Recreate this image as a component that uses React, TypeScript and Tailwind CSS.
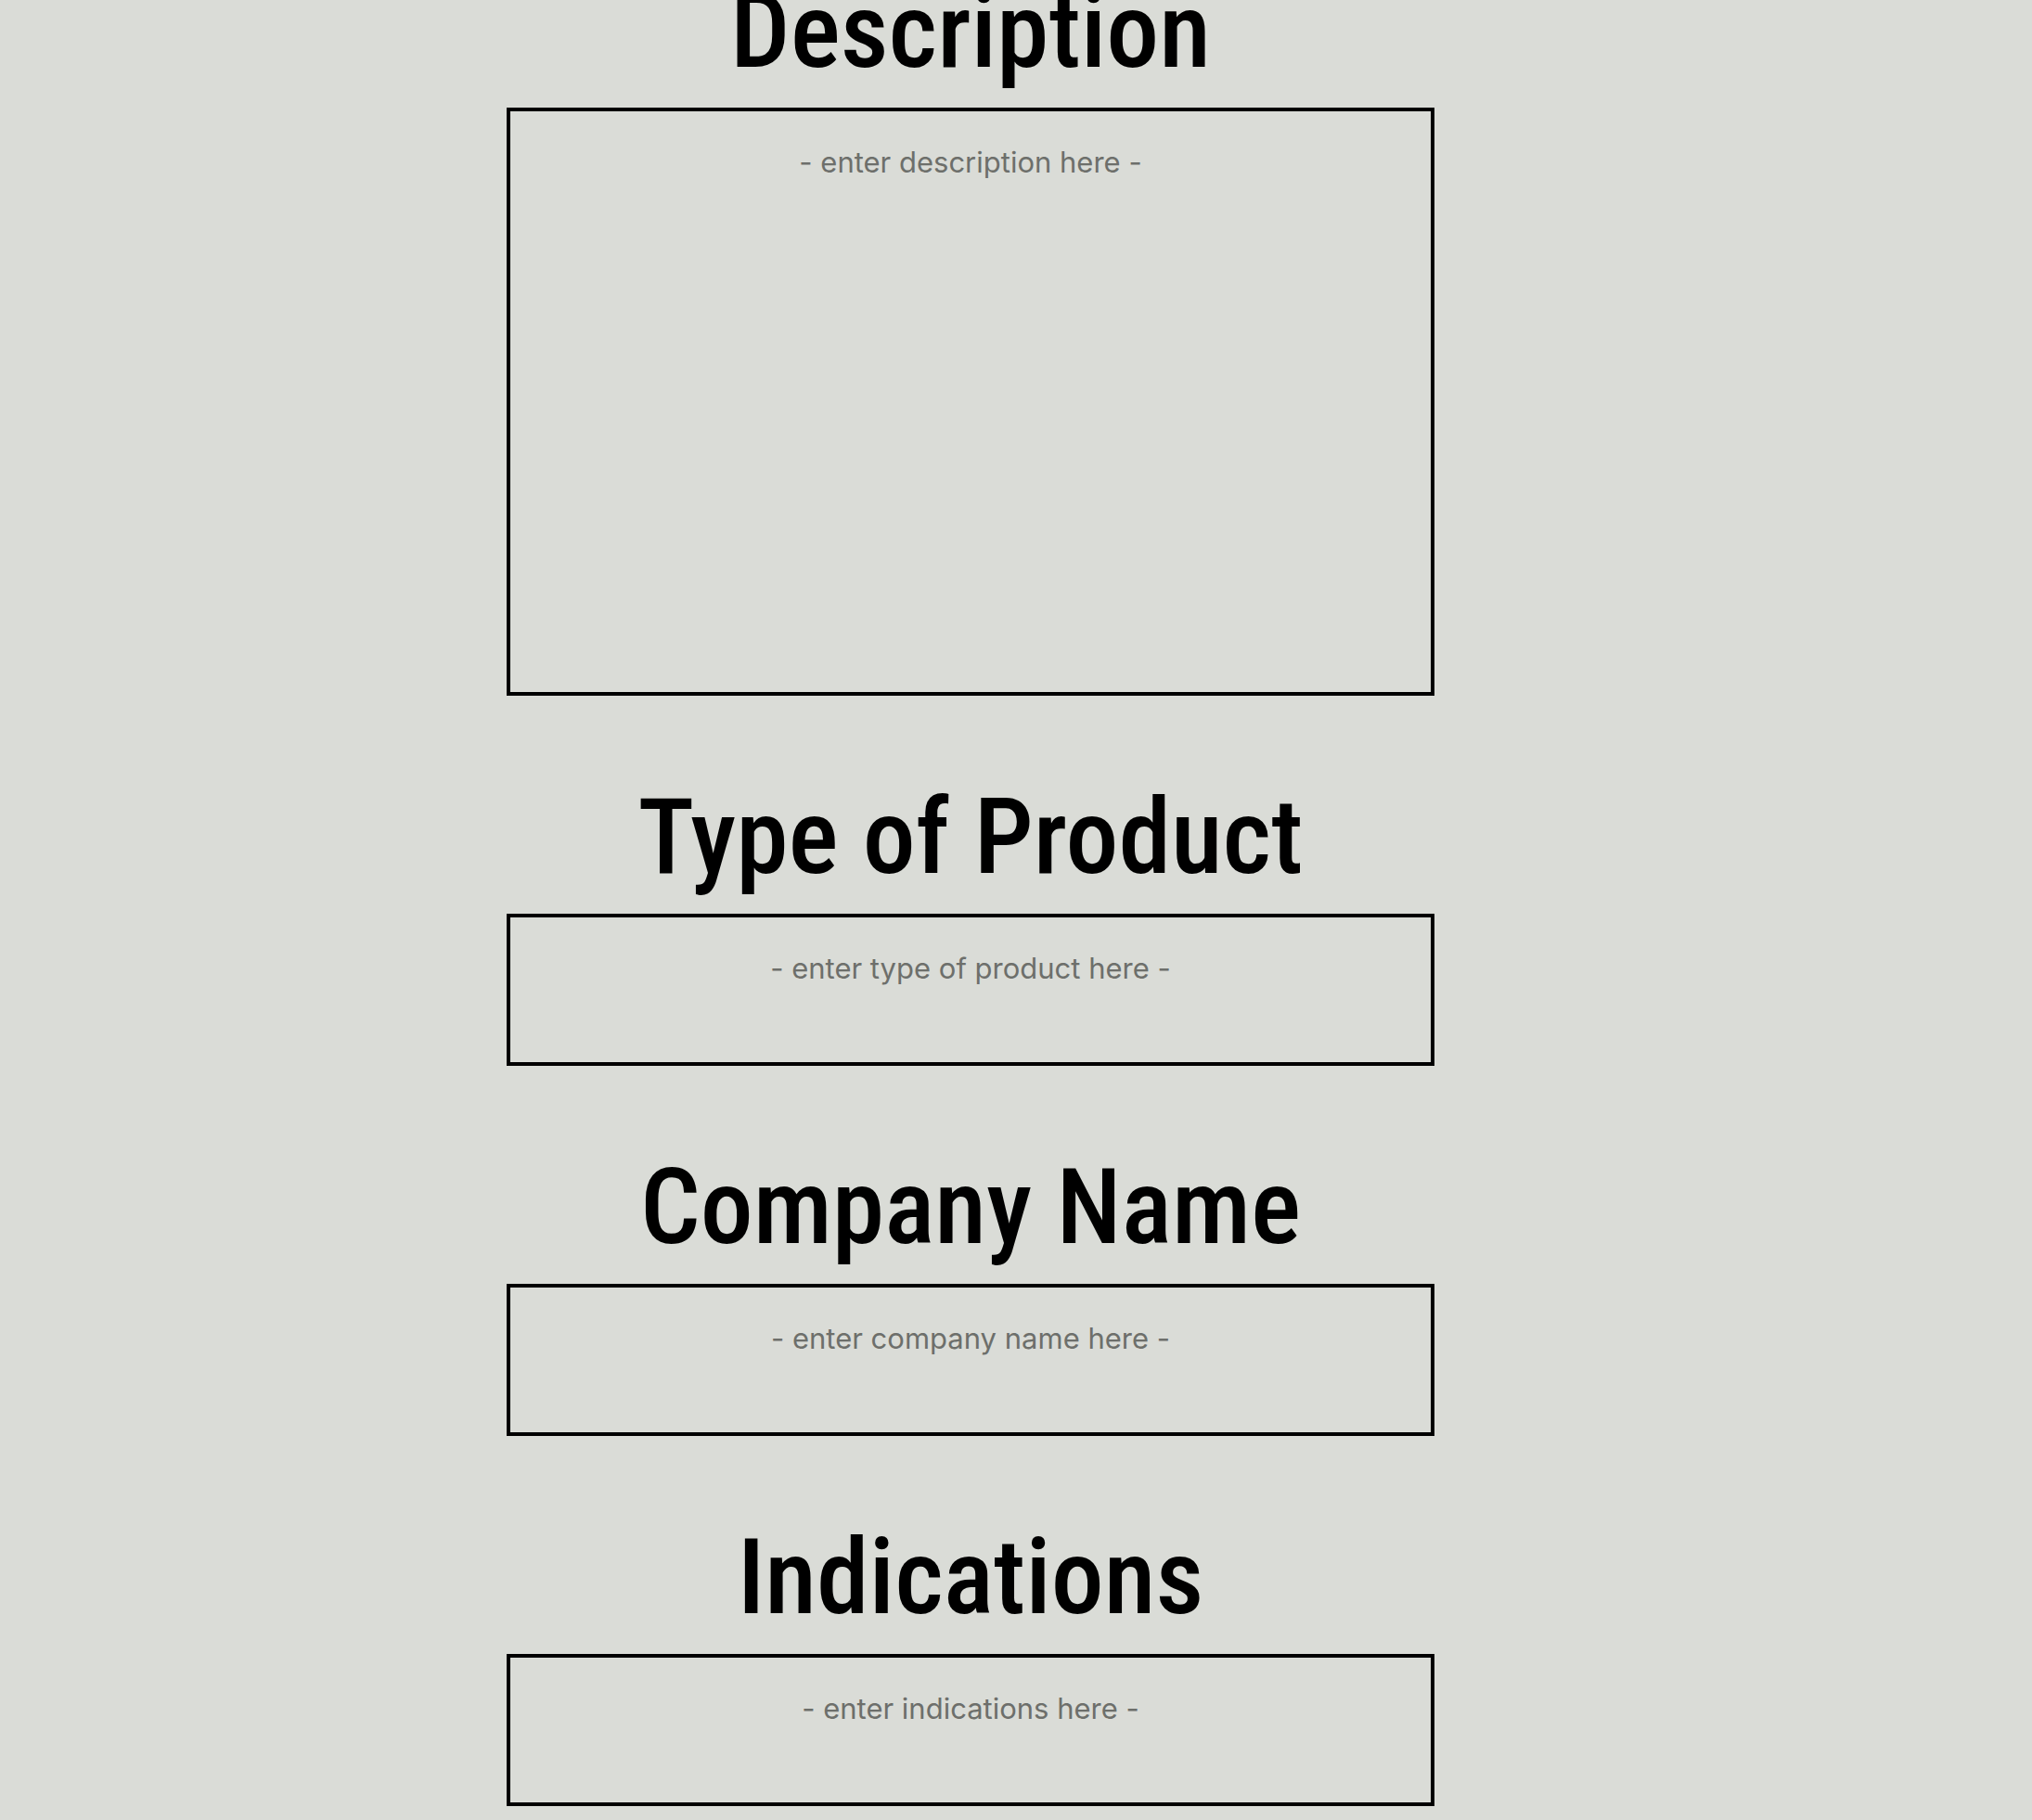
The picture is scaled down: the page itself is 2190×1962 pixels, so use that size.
import React from "react";

type Field = { id: string; title: string; placeholder: string; height: string };

const fields: Field[] = [
  { id: "description", title: "Description", placeholder: "- enter description here -", height: "h-[634px]" },
  { id: "type", title: "Type of Product", placeholder: "- enter type of product here -", height: "h-[164px]" },
  { id: "company", title: "Company Name", placeholder: "- enter company name here -", height: "h-[164px]" },
  { id: "indications", title: "Indications", placeholder: "- enter indications here -", height: "h-[164px]" },
];

export default function App() {
  return (
    <main className="h-screen overflow-hidden bg-[#dadcd7] pr-[98px]">
      <form className="-mt-8 flex flex-col items-center gap-[87px]">
        {fields.map((f) => (
          <div key={f.id} className="flex w-full flex-col items-center">
            <label
              htmlFor={f.id}
              className="mb-[18px] font-['Roboto_Condensed','Roboto',sans-serif] text-[114px] leading-[130px] font-medium whitespace-nowrap text-black"
            >
              {f.title}
            </label>
            <textarea
              id={f.id}
              placeholder={f.placeholder}
              className={`${f.height} block w-[1000px] max-w-full resize-none border-4 border-black bg-transparent px-10 pt-[35px] text-center font-['Inter',sans-serif] text-[31px] leading-[39px] text-black placeholder:text-[#6d6f6b] outline-none`}
            />
          </div>
        ))}
      </form>
    </main>
  );
}
